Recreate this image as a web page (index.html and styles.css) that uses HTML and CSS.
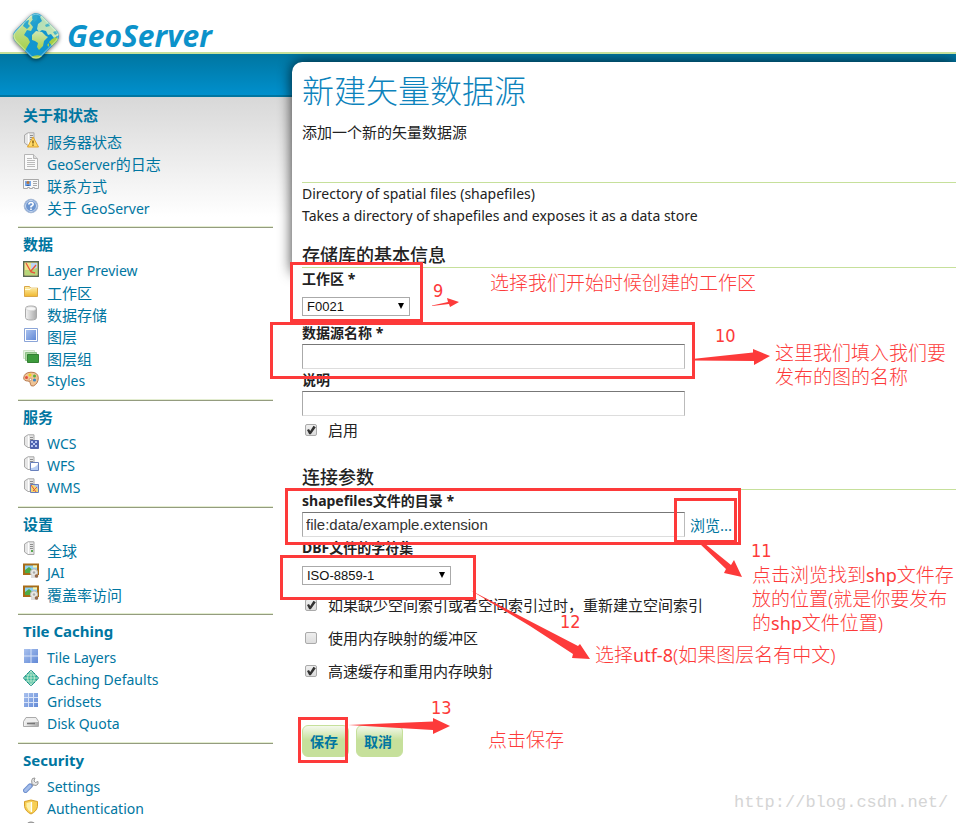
FILE: index.html
```html
<!DOCTYPE html>
<html lang="zh-CN">
<head>
<meta charset="utf-8">
<title>GeoServer: 新建矢量数据源</title>
<link rel="stylesheet" href="styles.css">
</head>
<body>
<svg class="defs" aria-hidden="true">
  <defs>
    <linearGradient id="gLeaf" x1="0" y1="0" x2="0" y2="1"><stop offset="0" stop-color="#cfe6b4"/><stop offset="1" stop-color="#a5cf45"/></linearGradient>
    <linearGradient id="gPale" x1="0" y1="0" x2="1" y2="1"><stop offset="0" stop-color="#a9dcb8"/><stop offset="1" stop-color="#d3e8b4"/></linearGradient>
    <linearGradient id="gSea" x1="0" y1="0" x2="1" y2="1"><stop offset="0" stop-color="#4dbbd0"/><stop offset=".5" stop-color="#1296cf"/><stop offset="1" stop-color="#0d95ce"/></linearGradient>
    <linearGradient id="gGrey"><stop offset="0" stop-color="#f4f4f4"/><stop offset="1" stop-color="#aaa"/></linearGradient>
    <linearGradient id="gGold" x1="0" y1="0" x2="0" y2="1"><stop offset="0" stop-color="#fff2b0"/><stop offset="1" stop-color="#efb72f"/></linearGradient>
    <linearGradient id="gBlue" x1="0" y1="0" x2="1" y2="1"><stop offset="0" stop-color="#a9c1ee"/><stop offset="1" stop-color="#6289d6"/></linearGradient>
    <clipPath id="cMark"><rect x="8.500" y="8.500" width="37" height="37" rx="8" transform="rotate(45 27 27)"/></clipPath>
    <g id="tower"><path d="M1.500 3 5 .8h6v12.700H5L1.500 11z" fill="#e6e6e6" stroke="#a9a9a9"/><path d="M5.500 1.500v11.500" stroke="#fff"/><path d="M7 3.500h3M7 5.500h3M7 7.500h3" stroke="#8d8d8d"/></g>
    <g id="picture"><path d="M1 1.500h14v9.500H1z" fill="#8fd0f3" stroke="#a86c17" stroke-width="2"/><path d="M2 10V7l4-3 5 4 3-1v3z" fill="#4eab45"/><path d="M10 3.500h4" stroke="#fff4a3" stroke-width="2"/><circle cx="11" cy="9.500" r="3.600" fill="#e8e8e4" stroke="#bbb"/><circle cx="11" cy="9.500" r="1.200" fill="#aaa"/><path d="M8 12h7v3H8z" fill="#ddd"/><circle cx="13.500" cy="13" r="1.800" fill="#94694c"/></g>
  </defs>
</svg>

<header class="header">
  <a class="logo" href="#">
    <svg class="logo-mark" viewBox="0 0 54 54" aria-hidden="true">
      <g clip-path="url(#cMark)">
        <path d="M0 0h54v54H0z" fill="url(#gSea)"/>
        <path d="M3 27 22 6l3 3-4 5 3 4-2 4-4-1-3 5 4 3 2 4-3 5-2 4-3 1z" fill="url(#gLeaf)"/>
        <path d="m16 12 4-1-1 4 2 2-3 3-4-3zM25 4l4 1-1 6-3 2-2-4z" fill="#2ea9cd"/>
        <path d="m28 20 1-5 4-3-2-4 4-4 18 20-8 5-3-4-3 1-2-4-4-1-3 2z" fill="url(#gPale)"/>
        <path d="m23 26 4-4 6 1 4 4 2 1-4 4-1 5-4 4-2-3 1-4-3-2-3-1z" fill="url(#gLeaf)"/>
        <path d="m40 33 3-3 4-2 3 3-7 6zM22 48q5-3 11-1l-3 6h-6zM38 36l2-2 0 4z" fill="#a5cf45"/>
        <path d="m44 23 5-2 1 3-4 2zM36 16l4-2 1 3-4 1z" fill="#48b5c4"/>
      </g>
      <rect x="9.500" y="9.500" width="35" height="35" rx="7" transform="rotate(45 27 27)" fill="none" stroke="#fff" stroke-opacity=".35"/>
    </svg>
    <span>GeoServer</span>
  </a>
</header>

<div class="page">
  <nav class="sidebar">
    <section>
      <h2>关于和状态</h2>
      <ul>
        <li><a href="#"><svg viewBox="0 0 16 16"><use href="#tower"/><path d="m10 5 5.500 10h-11z" fill="#ffd965" stroke="#dfa12b"/><path d="M10 8.500v3M10 12.500v1.200" stroke="#6b4d0c" stroke-width="1.300"/></svg>服务器状态</a></li>
        <li><a href="#"><svg viewBox="0 0 16 16"><path d="M1.500.5h9l4 4v11h-13z" fill="#fafafa" stroke="#b5b5b5"/><path d="M10.500.5v4h4" fill="#ddd" stroke="#b5b5b5"/><path d="M4 4.500h5M4 6.500h8M4 8.500h8M4 10.500h8M4 12.500h8" stroke="#bbb"/></svg><span><span class="en">GeoServer</span>的日志</span></a></li>
        <li><a href="#"><svg viewBox="0 0 16 16"><path d="M.5 3.500h15v9h-4v-1h-2v1h-3v-1h-2v1h-4z" fill="#f8f8f8" stroke="#a9a9a9"/><path d="M2 5h6v5H2z" fill="#75a7e8"/><circle cx="5" cy="6.500" r="1.500" fill="#b8763c"/><path d="M3 10q2-3 4 0z" fill="#3560a6"/><path d="M10 5.500h4M10 7.500h4M10 9.500h4" stroke="#aaa"/></svg>联系方式</a></li>
        <li><a href="#"><svg viewBox="0 0 16 16"><circle cx="8" cy="8" r="6.800" fill="#6c95cf" stroke="#a6b9d5"/><circle cx="8" cy="8" r="5.500" fill="none" stroke="#e1eaf7" stroke-width=".8"/><path d="M5.800 6.500Q6 4.500 8 4.500t2.200 1.700Q10.200 7.300 8 8.500v1M8 10.500v1.500" fill="none" stroke="#fff" stroke-width="1.600"/></svg><span>关于 <span class="en">GeoServer</span></span></a></li>
      </ul>
    </section>
    <section>
      <h2>数据</h2>
      <ul>
        <li><a class="en" href="#"><svg viewBox="0 0 16 16"><path d="M.7.700h14.600v14.600H.7z" fill="#f1e58c" stroke="#586953" stroke-width="1.400"/><path d="M8 2h6v5L8 9z" fill="#bcd6f5"/><path d="M2 9l5 0 7-2v7H2z" fill="#b7d779"/><path d="m3 2 5 9 4 1M13 4 8 10" stroke="#e8573e" fill="none" stroke-width="1.300"/></svg>Layer Preview</a></li>
        <li><a href="#"><svg viewBox="0 0 16 16"><path d="M1.500 13.500v-10h5l1 1.500h7v8.500z" fill="url(#gGold)" stroke="#d9a648"/><path d="M2 6.500h5l1-1.500h6" stroke="#fffbe0" fill="none"/></svg>工作区</a></li>
        <li><a href="#"><svg viewBox="0 0 16 16"><path d="M2.500 3.500q0-2.500 5.500-2.500t5.500 2.500v9q0 2.500-5.500 2.500t-5.500-2.500z" fill="url(#gGrey)" stroke="#aaa"/><ellipse cx="8" cy="3.700" rx="4.800" ry="2" fill="#f7f7f7" stroke="#ccc" stroke-width=".6"/></svg>数据存储</a></li>
        <li><a href="#"><svg viewBox="0 0 16 16"><path d="M1.500 1.500h13v13h-13z" fill="#fff" stroke="#8ba5d8"/><path d="M3 3h10v10H3z" fill="url(#gBlue)"/></svg>图层</a></li>
        <li><a href="#"><svg viewBox="0 0 16 16"><path d="M.5 1.500h11v8H.5z" fill="#e5f3df" stroke="#cfe3c9"/><path d="M2.500 3.500h11v8h-11z" fill="#a9d69f" stroke="#8fc089"/><path d="M4.500 5.500h11v8h-11z" fill="#3d9b3c" stroke="#338033"/></svg>图层组</a></li>
        <li><a class="en" href="#"><svg viewBox="0 0 16 16"><path d="M.7 7Q1 1.500 8 1.200q7 0 7.300 5.500 0 6-5 8.300-3 .3-2.800-1.800Q7.500 10 5 10 .7 10 .7 7z" fill="#efc496" stroke="#b97b4f"/><circle cx="3.500" cy="6.500" r="1.500" fill="#e44f3c"/><circle cx="7" cy="4" r="1.500" fill="#f1d51e"/><circle cx="11.500" cy="5" r="1.500" fill="#56ae3f"/><circle cx="11.500" cy="9" r="1.600" fill="#3b87c8"/><circle cx="7.500" cy="8.500" r="1.200" fill="#fff" stroke="#b97b4f" stroke-width=".7"/></svg>Styles</a></li>
      </ul>
    </section>
    <section>
      <h2>服务</h2>
      <ul>
        <li><a class="en" href="#"><svg viewBox="0 0 16 16"><use href="#tower"/><path d="M7.500 6.500h8v8h-8z" fill="#4c62b0" stroke="#5064ad"/><path d="M8 7h2v2H8zM12 7h2v2h-2zM10 9h2v2h-2zM8 11h2v2H8zM12 11h2v2h-2z" fill="#b9c7f2"/></svg>WCS</a></li>
        <li><a class="en" href="#"><svg viewBox="0 0 16 16"><use href="#tower"/><path d="M7.500 6.500h8v8h-8z" fill="#fff" stroke="#6880bd"/><path d="M8 14v-2q4 0 7-4v6z" fill="#b7cdf3"/></svg>WFS</a></li>
        <li><a class="en" href="#"><svg viewBox="0 0 16 16"><use href="#tower"/><path d="M7.500 6.500h8v8h-8z" fill="#f2d875" stroke="#6880bd"/><path d="M11 7h4v4z" fill="#a7c6ee"/><path d="m8 7 5 7M14 9l-4 4" stroke="#e4573d"/></svg>WMS</a></li>
      </ul>
    </section>
    <section>
      <h2>设置</h2>
      <ul>
        <li><a href="#"><svg viewBox="0 0 16 16"><use href="#tower"/><path d="M8 9h2v2H8z" fill="#59aa51"/></svg>全球</a></li>
        <li><a class="en" href="#"><svg viewBox="0 0 16 16"><use href="#picture"/></svg>JAI</a></li>
        <li><a href="#"><svg viewBox="0 0 16 16"><use href="#picture"/></svg>覆盖率访问</a></li>
      </ul>
    </section>
    <section>
      <h2>Tile Caching</h2>
      <ul>
        <li><a class="en" href="#"><svg viewBox="0 0 16 16"><path d="M1 1h14v14H1z" fill="url(#gBlue)"/><path d="M1 8h14M8 1v14" stroke="#d8e3f8"/></svg>Tile Layers</a></li>
        <li><a class="en" href="#"><svg viewBox="0 0 16 16"><path d="M8 .5q1 0 7.500 7.500Q9 15.500 8 15.500T.5 8Q7 .5 8 .5z" fill="#38b89c" stroke="#168a83"/><path d="M8 1q-7 7 0 14Q15 8 8 1zM1 8h14M3 5h10M3 11h10M8 1v14" fill="none" stroke="#d3f0d5" stroke-width=".8"/></svg>Caching Defaults</a></li>
        <li><a class="en" href="#"><svg viewBox="0 0 16 16"><path d="M1 1h14v14H1z" fill="url(#gBlue)"/><path d="M1 5.500h14M1 10.500h14M5.500 1v14M10.500 1v14" stroke="#d8e3f8"/></svg>Gridsets</a></li>
        <li><a class="en" href="#"><svg viewBox="0 0 16 16"><path d="M.5 7.500 3 3.500h10l2.500 4v5H.5z" fill="#eee" stroke="#aaa"/><path d="M1 8h14v4H1z" fill="url(#gGrey)"/><path d="M4 9.500h8" stroke="#777" stroke-width="1.500"/></svg>Disk Quota</a></li>
      </ul>
    </section>
    <section>
      <h2>Security</h2>
      <ul>
        <li><a class="en" href="#"><svg viewBox="0 0 16 16"><path d="m8 9 4-4" stroke="#999" stroke-width="3"/><path d="M9.500 1.500 12 1l-1 3 1.500 1.500L15 4.500q1 3-2 4-3 0-4-2-1-3 .5-5z" fill="#e6e6e6" stroke="#999"/><path d="m2.500 13.500 4.500-4.500" stroke="#6f90cf" stroke-width="5" stroke-linecap="round"/><path d="m2.500 13.500 4.500-4.500" stroke="#a4bdea" stroke-width="3" stroke-linecap="round"/></svg>Settings</a></li>
        <li><a class="en" href="#"><svg viewBox="0 0 16 16"><path d="M1.500 2.500 4 2l4-1 4 1 2.500.5v5q-1 5-6.500 7.500-5.500-2.500-6.500-7.500z" fill="#f7cf54" stroke="#d69e27"/><path d="M3.500 4 8 3v10Q4.500 11 3.500 7.500z" fill="#fff1a9"/><path d="M8.500 3v10" stroke="#fff" stroke-width="1.200"/></svg>Authentication</a></li>
        <li><a class="en" href="#" aria-label="Passwords"><svg viewBox="0 0 16 16"><circle cx="8" cy="6.500" r="5.500" fill="#bbb" stroke="#8a8a8a"/><circle cx="8" cy="9" r="3" fill="#eee"/></svg></a></li>
      </ul>
    </section>
  </nav>

  <main class="content">
    <h1>新建矢量数据源</h1>
    <p class="lead">添加一个新的矢量数据源</p>
    <div class="store en">
      <p>Directory of spatial files (shapefiles)</p>
      <p>Takes a directory of shapefiles and exposes it as a data store</p>
    </div>
    <form>
      <h3>存储库的基本信息</h3>
      <label class="field-label" for="workspace">工作区 *</label>
      <div class="select short"><select id="workspace"><option>F0021</option></select></div>
      <label class="field-label" for="name">数据源名称 *</label>
      <input class="text" type="text" id="name">
      <label class="field-label" for="desc">说明</label>
      <input class="text" type="text" id="desc">
      <label class="check first"><input type="checkbox" checked>启用</label>

      <h3 class="second">连接参数</h3>
      <label class="field-label" for="dir">shapefiles文件的目录 *</label>
      <div class="file"><input class="text" type="text" id="dir" value="file:data/example.extension"><a href="#">浏览...</a></div>
      <label class="field-label" for="charset">DBF文件的字符集</label>
      <div class="select"><select id="charset"><option>ISO-8859-1</option></select></div>
      <div class="checks">
        <label class="check"><input type="checkbox" checked>如果缺少空间索引或者空间索引过时，重新建立空间索引</label>
        <label class="check"><input type="checkbox">使用内存映射的缓冲区</label>
        <label class="check"><input type="checkbox" checked>高速缓存和重用内存映射</label>
      </div>
      <div class="actions"><button type="button">保存</button><button type="button">取消</button></div>
    </form>
  </main>
</div>

<div class="notes">
  <svg viewBox="0 0 956 823" width="956" height="823" aria-hidden="true">
    <g fill="none" stroke="#fd3a3a" stroke-width="3">
      <path d="M291.500 263.500h130v57h-130zM271.500 323.500h422v54h-422zM286.500 489.500h453v54h-453zM675.500 499.500h60v42h-60zM281.500 556.500h193v42h-193zM299.500 718.500h47v43h-47z"/>
    </g>
    <g fill="#fd3a3a">
      <path d="m432 305.500 16-3.500-1-4 12 4-9 5-1-3-17 2z"/>
      <path d="m692 359 61-6.500v-3.500l17 7-16 9v-4l-62-.5z"/>
      <path d="M699 543h5l27 22 3-5 8 17-18-4 2-4z"/>
      <path d="M470 590 578 646l2-2 10 15-18-1 1-4-43-28z"/>
      <path d="m348 725 85-3.500v-3.500l17 8-17 8v-4z"/>
    </g>
  </svg>
  <span class="note digits n9">9</span>
  <span class="note t9">选择我们开始时候创建的工作区</span>
  <span class="note digits n10">10</span>
  <span class="note t10">这里我们填入我们要<br>发布的图的名称</span>
  <span class="note digits n11">11</span>
  <span class="note t11">点击浏览找到<b>shp</b>文件存<br>放的位置(就是你要发布<br>的<b>shp</b>文件位置)</span>
  <span class="note digits n12">12</span>
  <span class="note t12">选择<b>utf-8</b>(如果图层名有中文)</span>
  <span class="note digits n13">13</span>
  <span class="note t13">点击保存</span>
  <span class="watermark">http://blog.csdn.net/</span>
</div>
</body>
</html>
```
FILE: styles.css
```css
* { box-sizing: border-box; }

body {
  position: relative;
  height: 100vh;
  margin: 0;
  overflow: hidden;
  background: #fff;
  color: #222;
  font: 15px/22px "Noto Sans", "Noto Sans CJK SC", sans-serif;
}

h1, h2, h3, p, ul { margin: 0; padding: 0; }
ul { list-style: none; }
a { color: #0076a1; text-decoration: none; }
.en { font-size: 14px; }
.defs { position: absolute; width: 0; height: 0; }

.header {
  height: 54px;
  border-bottom: 2px solid #c6e09b;
}
.logo {
  position: relative;
  z-index: 2;
  display: flex;
  align-items: center;
  gap: 4px;
  padding: 9px 0 0 9px;
  color: #0c92ca;
  font: italic 700 30px/54px "Open Sans", sans-serif;
}
.logo-mark {
  width: 54px;
  height: 54px;
  filter: drop-shadow(0 1px 2px rgba(0, 0, 0, .6));
}

.page {
  display: grid;
  grid-template-columns: 292px minmax(0, 1fr);
  background:
    linear-gradient(#0076a1, #0090cd 41px, #0076a1 41px, #0076a1 43px, transparent 43px) 0 0 / 100% 43px no-repeat,
    linear-gradient(#d8d8d8, #fff) 0 43px / 100% 120px no-repeat;
}

.sidebar { padding: 50px 19px 0 18px; overflow: hidden; }
.sidebar section {
  padding: 5px 5px 8px;
  border-bottom: 1px solid #949c7f;
  box-shadow: inset 0 -1px #e3edd0;
}
.sidebar section:first-child { padding-top: 0; }
.sidebar h2 {
  margin-bottom: 5px;
  color: #0076a1;
  font-size: 15px;
  line-height: 22px;
}
.sidebar a { display: flex; align-items: center; gap: 8px; height: 22px; }
.sidebar svg { width: 16px; height: 16px; margin-bottom: 4px; }

.content {
  position: relative;
  z-index: 0;
  min-height: 770px;
  margin-top: 8px;
  padding: 10px 0 0 10px;
  border-top-left-radius: 10px;
  background: #fff;
}
.content::before {
  content: "";
  position: absolute;
  z-index: -1;
  inset: 0 0 auto 0;
  height: 210px;
  border-radius: 10px 0 0 0;
  box-shadow: 0 0 14px rgba(0, 0, 0, .8);
  clip-path: polygon(-30px -8px, 100% -8px, 100% 100%, 0 100%, 0 calc(100% + 30px), -30px calc(100% + 30px));
}
h1 {
  color: #0d83bc;
  font-size: 32px;
  font-weight: 300;
  line-height: 38px;
}
.lead { margin-top: 11px; }
.store {
  margin-top: 39px;
  border-top: 1px solid #c6e09b;
}
h3 {
  margin-top: 16px;
  border-bottom: 1px solid #c6e09b;
  font-size: 18px;
  font-weight: 500;
  line-height: 24px;
}
h3.second { margin-top: 24px; }
.field-label { display: block; font-weight: 700; font-size: 14px; }
.text {
  display: block;
  width: 383px;
  height: 25px;
  padding: 0 3px;
  border: 1px solid;
  border-color: #777 #bbb #ddd #aaa;
  background: #fff;
  color: #333;
  font: 15px "Liberation Sans", sans-serif;
}
.file { display: flex; align-items: center; gap: 5px; }
.select { position: relative; width: 149px; margin: 7px 0 9px; }
.select.short { width: 108px; margin-bottom: 6px; }
.select select {
  display: block;
  width: 100%;
  height: 19px;
  padding: 0 4px;
  appearance: none;
  border: 1px solid #aaa;
  border-radius: 0;
  background: #fff;
  color: #111;
  font: 13px "Liberation Sans", sans-serif;
}
.select::after {
  content: "";
  position: absolute;
  top: 6px;
  right: 6px;
  border: solid transparent;
  border-width: 6px 3px 0;
  border-top-color: #000;
}
.check { display: flex; align-items: center; gap: 11px; }
.check.first { margin-top: 3px; }
.check input {
  width: 12px;
  height: 12px;
  margin: 0 0 0 3px;
  appearance: none;
  border: 1px solid #aaa;
  border-radius: 2px;
  background: linear-gradient(#eee, #ddd);
}
.check input:checked::before {
  content: "";
  display: block;
  width: 10px;
  height: 10px;
  background: #333;
  clip-path: polygon(10% 50%, 30% 40%, 42% 60%, 75% 8%, 98% 22%, 48% 92%, 32% 92%);
}
.checks { display: grid; gap: 11px; }
.actions { display: flex; gap: 7px; margin-top: 43px; }
button {
  width: 47px;
  height: 32px;
  padding: 0 3px 0 0;
  border: 1px solid #c6e09b;
  border-radius: 6px;
  background: linear-gradient(#f4f9ed, #c6e09b 14px);
  color: #0076a1;
  font: 700 14px "Noto Sans", "Noto Sans CJK SC", sans-serif;
}

.notes { position: absolute; z-index: 3; top: 0; left: 0; pointer-events: none; }
.notes svg { display: block; }
.note {
  position: absolute;
  color: #fd3a3a;
  font: 300 19px/24px "Noto Sans", "Noto Sans CJK SC", sans-serif;
  white-space: nowrap;
}
.note b { font-weight: 400; font-size: 18px; }
.note.digits { font: 400 18px/20px "DejaVu Sans Condensed", "DejaVu Sans", sans-serif; }
.n9 { left: 433px; top: 281px; }
.t9 { left: 490px; top: 271px; }
.n10 { left: 715px; top: 326px; }
.t10 { left: 775px; top: 341px; }
.n11 { left: 751px; top: 541px; }
.t11 { left: 752px; top: 563px; }
.n12 { left: 560px; top: 612px; }
.t12 { left: 595px; top: 643px; }
.n13 { left: 431px; top: 698px; }
.t13 { left: 488px; top: 728px; }
.watermark {
  position: absolute;
  left: 734px;
  top: 792px;
  color: #d5d5d5;
  font: 17px/22px "Liberation Mono", monospace;
}
```
